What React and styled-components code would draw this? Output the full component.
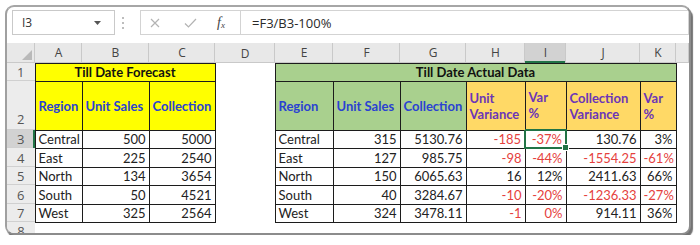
import React from 'react'
import styled, { createGlobalStyle } from 'styled-components'

const GlobalStyle = createGlobalStyle`
  html, body {
    margin: 0;
    padding: 0;
    background: #fff;
  }
  body {
    font-family: Lato, "Liberation Sans", Arial, sans-serif;
  }
`

const GREEN = '#217346'

const Frame = styled.div`
  margin: 5px 0 0 5px;
  width: 686px;
  height: 230px;
  box-sizing: border-box;
  border: 2px solid #8c8c8c;
  border-top-color: #a6a6a6;
  border-left-color: #a0a0a0;
  border-radius: 9px;
  box-shadow: 2px 3px 1px rgba(0, 0, 0, 0.55);
  background: #fff;
  overflow: hidden;
`

const FormulaBar = styled.div`
  display: flex;
  height: 25px;
  margin: 3px 0 8px 5px;
  font-family: "Open Sans", "Noto Sans", sans-serif;
  font-size: 12px;
  color: #333;
`

const NameBox = styled.div`
  width: 103px;
  box-sizing: border-box;
  border: 1px solid #c9c9c9;
  display: flex;
  align-items: center;
  justify-content: space-between;
  padding: 0 13px 0 9px;
`

const Divider = styled.div`
  width: 25px;
  box-sizing: border-box;
  padding-left: 7px;
  display: flex;
  flex-direction: column;
  justify-content: center;
  gap: 3px;
`

const Dot = styled.span`
  width: 2px;
  height: 2px;
  background: #bdbdbd;
`

const FxGroup = styled.div`
  width: 100px;
  box-sizing: border-box;
  border: 1px solid #d3d3d3;
  border-right: none;
  display: flex;
  align-items: center;
  padding-left: 9px;
  gap: 24px;
`

const Fx = styled.span`
  font-family: "Liberation Serif", serif;
  font-style: italic;
  font-size: 14px;
  color: #444;
  margin-left: -4px;

  sub {
    font-size: 9px;
    vertical-align: -1px;
  }
`

const FormulaInput = styled.div`
  flex: 1;
  border: 1px solid #d3d3d3;
  display: flex;
  align-items: center;
  padding-left: 11px;
  font-size: 13px;
  color: #2a2a2a;
`

const Sheet = styled.table`
  border-collapse: collapse;
  table-layout: fixed;
  width: 682px;
  font-family: Lato, "Liberation Sans", sans-serif;
  font-size: 13px;
  color: #222;
`

const Col = styled.col`
  width: ${p => p.$w}px;
`

const Row = styled.tr`
  height: ${p => p.$h}px;
`

const Corner = styled.th`
  background: #e8e8e8;
  padding: 0 3px 3px 0;
  text-align: right;
  vertical-align: bottom;
  box-shadow: inset -1px -1px 0 #c9c9c9;
  svg { display: block; margin-left: auto; }
`

const ColHead = styled.th`
  background: ${p => (p.$active ? '#d2d2d2' : '#e8e8e8')};
  font-family: "Open Sans", "Noto Sans", sans-serif;
  font-weight: normal;
  font-size: 12px;
  color: #444;
  padding: 0;
  text-align: center;
  box-shadow: ${p => (p.$active
    ? `inset -1px 0 0 #c9c9c9, inset 0 -2px 0 ${GREEN}`
    : 'inset -1px -1px 0 #c9c9c9')};
`

const RowHead = styled.th`
  background: ${p => (p.$active ? '#d2d2d2' : '#ececec')};
  font-family: "Open Sans", "Noto Sans", sans-serif;
  font-weight: normal;
  font-size: 13px;
  color: #555;
  padding: 0 0 ${p => (p.$bottom ? 2 : 0)}px;
  text-align: center;
  vertical-align: ${p => (p.$bottom ? 'bottom' : 'middle')};
  box-shadow: ${p => (p.$active
    ? `inset -2px 0 0 ${GREEN}, inset 0 -1px 0 #d0d0d0`
    : 'inset 0 -1px 0 #d0d0d0')};
`

const Cell = styled.td`
  position: relative;
  padding: 0 3px;
  background: ${p => p.$fill || 'transparent'};
  color: ${p => p.$color || '#222'};
  font-weight: ${p => (p.$bold ? 700 : 400)};
  text-align: ${p => p.$align || 'left'};
  white-space: ${p => (p.$wrap ? 'pre-line' : 'nowrap')};
  line-height: 16px;
  vertical-align: middle;
  overflow: visible;
  border: ${p => (p.$selected ? `2px solid ${GREEN}` : p.$box ? '1px solid #1c1c1c' : 'none')};
`

const Handle = styled.span`
  position: absolute;
  right: -4px;
  bottom: -4px;
  width: 5px;
  height: 5px;
  background: ${GREEN};
  border: 1px solid #fff;
`

const YELLOW = '#ffff00'
const LIME = '#a9d08e'
const GOLD = '#ffd966'
const BLUE = '#2a42d2'
const PURPLE = '#6b35b8'
const RED = '#e5413d'

const columns = [28, 47, 67, 66, 60, 58, 67, 66, 59, 41, 74, 36, 13]
const letters = ['A', 'B', 'C', 'D', 'E', 'F', 'G', 'H', 'I', 'J', 'K', '']

const forecast = [
  ['Central', '500', '5000'],
  ['East', '225', '2540'],
  ['North', '134', '3654'],
  ['South', '50', '4521'],
  ['West', '325', '2564'],
]

const actual = [
  ['Central', '315', '5130.76', '-185', '-37%', '130.76', '3%'],
  ['East', '127', '985.75', '-98', '-44%', '-1554.25', '-61%'],
  ['North', '150', '6065.63', '16', '12%', '2411.63', '66%'],
  ['South', '40', '3284.67', '-10', '-20%', '-1236.33', '-27%'],
  ['West', '324', '3478.11', '-1', '0%', '914.11', '36%'],
]

const varianceHeads = ['Unit\nVariance', 'Var\n%', 'Collection\nVariance', 'Var\n%']

const rowHeights = [18, 19, 18, 19, 18]

// I7 shows 0% but the value behind it is negative, so it is red too
const isRed = (value, r, c) => value.startsWith('-') || (r === 4 && c === 4)

const CloseIcon = () => (
  <svg width="10" height="10" viewBox="0 0 10 10">
    <path d="M1 1 L9 9 M9 1 L1 9" stroke="#b3b3b3" strokeWidth="1.2" fill="none" />
  </svg>
)

const CheckIcon = () => (
  <svg width="13" height="10" viewBox="0 0 13 10">
    <path d="M1 5.5 L4.5 9 L12 1" stroke="#b3b3b3" strokeWidth="1.2" fill="none" />
  </svg>
)

const DropArrow = () => (
  <svg width="7" height="4" viewBox="0 0 7 4">
    <path d="M0 0 H7 L3.5 4 Z" fill="#555" />
  </svg>
)

const CornerMark = () => (
  <svg width="10" height="10" viewBox="0 0 10 10">
    <path d="M10 0 V10 H0 Z" fill="#b9b9b9" />
  </svg>
)

const App = () => (
  <>
    <GlobalStyle />
    <Frame>
      <FormulaBar>
        <NameBox>
          <span>I3</span>
          <DropArrow />
        </NameBox>
        <Divider>
          <Dot />
          <Dot />
          <Dot />
        </Divider>
        <FxGroup>
          <CloseIcon />
          <CheckIcon />
          <Fx>f<sub>x</sub></Fx>
        </FxGroup>
        <FormulaInput>=F3/B3-100%</FormulaInput>
      </FormulaBar>

      <Sheet>
        <colgroup>
          {columns.map((w, i) => <Col key={i} $w={w} />)}
        </colgroup>
        <tbody>
          <Row $h={20}>
            <Corner><CornerMark /></Corner>
            {letters.map((l, i) => (
              <ColHead key={i} $active={l === 'I'}>{l}</ColHead>
            ))}
          </Row>

          <Row $h={18}>
            <RowHead>1</RowHead>
            <Cell colSpan={3} $box $bold $fill={YELLOW} $align="center" $color="#111">Till Date Forecast</Cell>
            <Cell />
            <Cell colSpan={7} $box $bold $fill={LIME} $align="center" $color="#111">Till Date Actual Data</Cell>
            <Cell />
          </Row>

          <Row $h={49}>
            <RowHead $bottom>2</RowHead>
            <Cell $box $bold $fill={YELLOW} $color={BLUE}>Region</Cell>
            <Cell $box $bold $fill={YELLOW} $color={BLUE}>Unit Sales</Cell>
            <Cell $box $bold $fill={YELLOW} $color={BLUE}>Collection</Cell>
            <Cell />
            <Cell $box $bold $fill={LIME} $color={BLUE}>Region</Cell>
            <Cell $box $bold $fill={LIME} $color={BLUE}>Unit Sales</Cell>
            <Cell $box $bold $fill={LIME} $color={BLUE}>Collection</Cell>
            {varianceHeads.map((h, i) => (
              <Cell key={i} $box $bold $wrap $fill={GOLD} $color={PURPLE}>{h}</Cell>
            ))}
            <Cell />
          </Row>

          {forecast.map((f, r) => (
            <Row key={r} $h={rowHeights[r]}>
              <RowHead $active={r === 0}>{r + 3}</RowHead>
              {f.map((v, c) => (
                <Cell key={c} $box $align={c === 0 ? 'left' : 'right'}>{v}</Cell>
              ))}
              <Cell />
              {actual[r].map((v, c) => (
                <Cell
                  key={c}
                  $box
                  $selected={r === 0 && c === 4}
                  $align={c === 0 ? 'left' : 'right'}
                  $color={isRed(v, r, c) ? RED : undefined}
                >
                  {v}
                  {r === 0 && c === 4 && <Handle />}
                </Cell>
              ))}
              <Cell />
            </Row>
          ))}

          <Row $h={18}>
            <RowHead>8</RowHead>
            {letters.map((l, i) => <Cell key={i} />)}
          </Row>
        </tbody>
      </Sheet>
    </Frame>
  </>
)

export default App
